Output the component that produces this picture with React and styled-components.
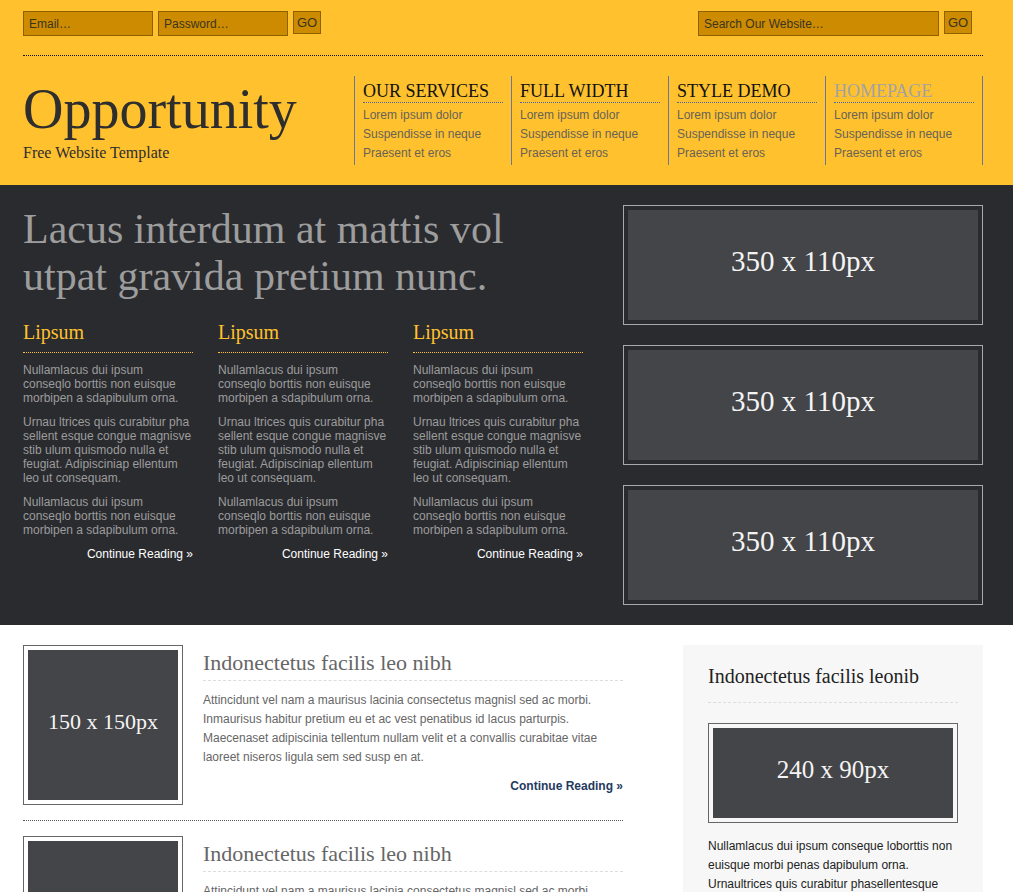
import React from 'react';
import styled, { createGlobalStyle } from 'styled-components';

const GlobalStyle = createGlobalStyle`
body {
    margin: 0;
    background: #fff;
    font-family: "Liberation Sans", Arial, sans-serif;
}
* { box-sizing: border-box; }
`

const serif = `"Liberation Serif", "Times New Roman", serif`;

const Header = styled.header`
background: #ffc12e;
`
const Container = styled.div`
width: 960px;
margin-left: 23px;
`
const TopBar = styled.div`
display: flex;
justify-content: space-between;
padding: 11px 0 19px;
border-bottom: 1px dotted #111;
`
const Form = styled.form`
display: flex;
align-items: flex-start;
gap: 5px;
margin-right: ${p => p.$right || 0}px;
`
const Field = styled.input`
width: ${p => p.$w}px;
height: 25px;
padding: 0 5px;
background: #cc8b00;
border: 1px solid #8d6100;
font: 12px "Liberation Sans", Arial, sans-serif;
color: #333;
outline: none;
&::placeholder { color: #3b3420; opacity: 1; }
`
const Go = styled.button`
width: 28px;
height: 23px;
padding: 0;
background: #cc8b00;
border: 1px solid #8d6100;
font: 13px "Liberation Sans", Arial, sans-serif;
color: #3b3420;
`
const Masthead = styled.div`
display: flex;
align-items: flex-start;
padding: 20px 0;
`
const Brand = styled.div`
margin-top: 5px;
`
const Logo = styled.h1`
margin: 0;
font: 400 56px/56px ${serif};
color: #2e2e2e;
`
const Tagline = styled.div`
margin-top: 6px;
font: 16px/20px ${serif};
color: #2e2e2e;
`
const Nav = styled.nav`
display: flex;
margin-left: auto;
border-right: 1px solid #68789a;
`
const NavCol = styled.div`
width: 157px;
height: 89px;
padding: 4px 8px 0;
border-left: 1px solid #68789a;
`
const NavTitle = styled.div`
font: 18px/22px ${serif};
text-transform: uppercase;
color: ${p => p.$active ? '#a3a3a3' : '#111'};
border-bottom: 1px dotted #4f63a8;
`
const NavLinks = styled.div`
margin-top: 3px;
font-size: 12px;
line-height: 19px;
color: #686356;
`

const Feature = styled.section`
background: #2a2b2f;
padding: 20px 0;
`
const FeatureRow = styled.div`
display: flex;
`
const FeatureMain = styled.div`
width: 560px;
`
const Headline = styled.h2`
margin: 1px 0 0;
font: 400 42px/47px ${serif};
color: #9d9d9d;
`
const Columns = styled.div`
display: flex;
gap: 25px;
margin-top: 20px;
`
const Col = styled.div`
width: 170px;
`
const ColTitle = styled.h3`
margin: 0;
padding-bottom: 8px;
font: 400 20px/24px ${serif};
color: #ffc12e;
border-bottom: 1px dotted #ffc12e;
`
const ColText = styled.p`
margin: 10px 0 0;
font-size: 12px;
line-height: 14px;
color: #9c9c9c;
text-align: ${p => p.$right ? 'right' : 'left'};
`
const WhiteLink = styled.a`
color: #fff;
text-decoration: none;
`
const Slides = styled.div`
display: flex;
flex-direction: column;
gap: 20px;
margin-left: auto;
`
const Frame = styled.div`
width: ${p => p.$w}px;
height: ${p => p.$h}px;
padding: 4px;
border: 1px solid ${p => p.$line};
`
const Placeholder = styled.div`
display: flex;
align-items: center;
justify-content: center;
height: 100%;
padding-bottom: ${p => p.$lift || 4}px;
background: #444549;
color: #f4f4f4;
font: ${p => p.$size}px ${serif};
`

const Body = styled.div`
display: flex;
gap: 60px;
padding-top: 20px;
`
const Posts = styled.div`
width: 600px;
`
const Post = styled.article`
display: flex;
gap: 20px;
padding: ${p => p.$first ? 0 : 15}px 0 15px;
border-bottom: 1px dotted #555;
`
const PostContent = styled.div`
flex: 1;
`
const PostTitle = styled.h2`
margin: 5px 0 0;
padding-bottom: 4px;
font: 400 22px/26px ${serif};
color: #666;
border-bottom: 1px dashed #ddd;
`
const PostText = styled.p`
margin: 10px 0 0;
font-size: 12px;
line-height: 19px;
color: #666;
`
const More = styled.a`
display: block;
margin-top: 10px;
text-align: right;
font-size: 12px;
line-height: 19px;
font-weight: 700;
color: #1f3a60;
text-decoration: none;
`
const Sidebar = styled.aside`
width: 300px;
padding: 19px 25px 25px;
background: #f7f7f7;
`
const SideTitle = styled.h3`
margin: 0 0 20px;
padding-bottom: 14px;
font: 400 20px/24px ${serif};
color: #222;
border-bottom: 1px dashed #ddd;
`
const SideText = styled.p`
margin: 14px 0 0;
font-size: 12px;
line-height: 19px;
color: #222;
`

const navItems = [
    { title: 'Our Services' },
    { title: 'Full Width' },
    { title: 'Style Demo' },
    { title: 'Homepage', active: true },
];

const postText = 'Attincidunt vel nam a maurisus lacinia consectetus magnisl sed ac morbi. Inmaurisus habitur pretium eu et ac vest penatibus id lacus parturpis. Maecenaset adipiscinia tellentum nullam velit et a convallis curabitae vitae laoreet niseros ligula sem sed susp en at.';

function App() {
    return (
        <>
            <GlobalStyle />
            <Header>
                <Container>
                    <TopBar>
                        <Form onSubmit={e => e.preventDefault()}>
                            <Field $w={130} placeholder="Email…" />
                            <Field $w={130} placeholder="Password…" />
                            <Go>GO</Go>
                        </Form>
                        <Form $right={11} onSubmit={e => e.preventDefault()}>
                            <Field $w={241} placeholder="Search Our Website…" />
                            <Go>GO</Go>
                        </Form>
                    </TopBar>
                    <Masthead>
                        <Brand>
                            <Logo>Opportunity</Logo>
                            <Tagline>Free Website Template</Tagline>
                        </Brand>
                        <Nav>
                            {navItems.map(item => (
                                <NavCol key={item.title}>
                                    <NavTitle $active={item.active}>{item.title}</NavTitle>
                                    <NavLinks>
                                        <div>Lorem ipsum dolor</div>
                                        <div>Suspendisse in neque</div>
                                        <div>Praesent et eros</div>
                                    </NavLinks>
                                </NavCol>
                            ))}
                        </Nav>
                    </Masthead>
                </Container>
            </Header>

            <Feature>
                <Container>
                    <FeatureRow>
                        <FeatureMain>
                            <Headline>Lacus interdum at mattis vol utpat gravida pretium nunc.</Headline>
                            <Columns>
                                {[1, 2, 3].map(n => (
                                    <Col key={n}>
                                        <ColTitle>Lipsum</ColTitle>
                                        <ColText>Nullamlacus dui ipsum conseqlo borttis non euisque morbipen a sdapibulum orna.</ColText>
                                        <ColText>Urnau ltrices quis curabitur pha sellent esque congue magnisve stib ulum quismodo nulla et feugiat. Adipisciniap ellentum leo ut consequam.</ColText>
                                        <ColText>Nullamlacus dui ipsum conseqlo borttis non euisque morbipen a sdapibulum orna.</ColText>
                                        <ColText $right><WhiteLink href="#">Continue Reading &raquo;</WhiteLink></ColText>
                                    </Col>
                                ))}
                            </Columns>
                        </FeatureMain>
                        <Slides>
                            {[1, 2, 3].map(n => (
                                <Frame key={n} $w={360} $h={120} $line="#a9a9a9">
                                    <Placeholder $size={29} $lift={8}>350 x 110px</Placeholder>
                                </Frame>
                            ))}
                        </Slides>
                    </FeatureRow>
                </Container>
            </Feature>

            <Container>
                <Body>
                    <Posts>
                        {[1, 2].map(n => (
                            <Post key={n} $first={n === 1}>
                                <Frame $w={160} $h={160} $line="#666">
                                    <Placeholder $size={22} $lift={6}>150 x 150px</Placeholder>
                                </Frame>
                                <PostContent>
                                    <PostTitle>Indonectetus facilis leo nibh</PostTitle>
                                    <PostText>{postText}</PostText>
                                    <More href="#">Continue Reading &raquo;</More>
                                </PostContent>
                            </Post>
                        ))}
                    </Posts>
                    <Sidebar>
                        <SideTitle>Indonectetus facilis leonib</SideTitle>
                        <Frame $w={250} $h={100} $line="#666">
                            <Placeholder $size={25} $lift={6}>240 x 90px</Placeholder>
                        </Frame>
                        <SideText>Nullamlacus dui ipsum conseque loborttis non euisque morbi penas dapibulum orna. Urnaultrices quis curabitur phasellentesque congue magnisvestibulum quismodo nulla et feugiat adipisciniapellentum leo.</SideText>
                    </Sidebar>
                </Body>
            </Container>
        </>
    );
}

export default App;
